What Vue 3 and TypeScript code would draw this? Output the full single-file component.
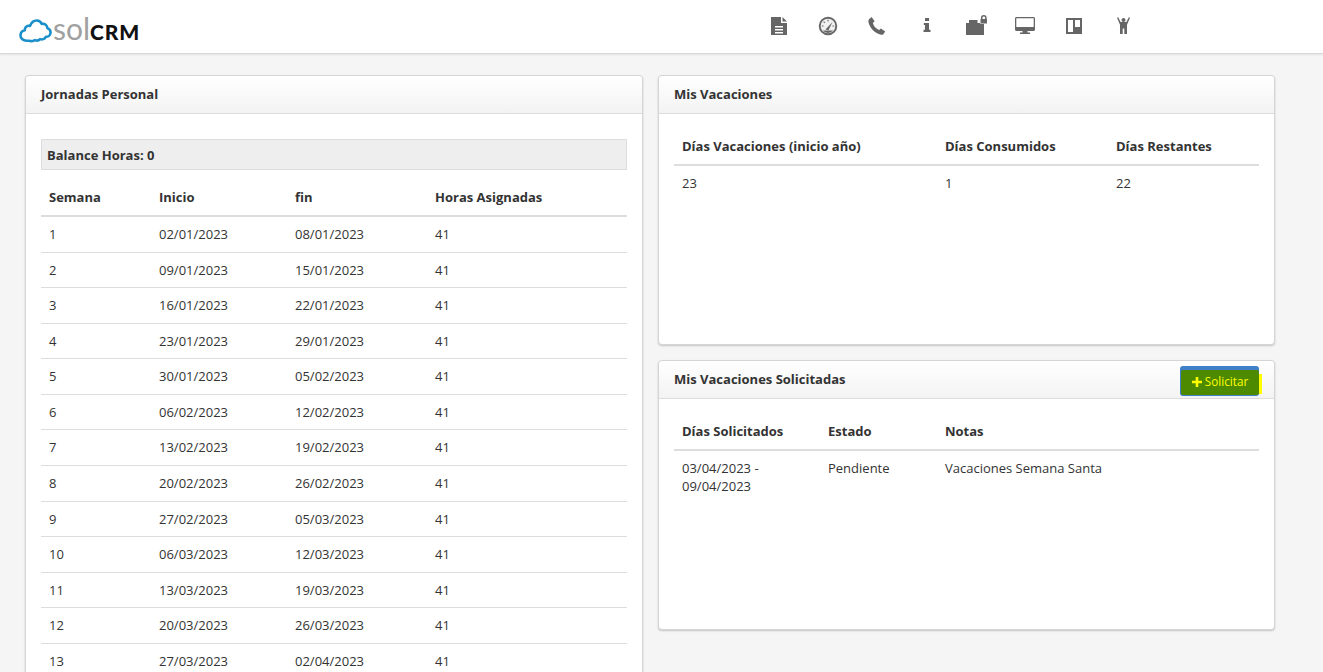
<script setup lang="ts">
const semanas = [
  ["02/01/2023", "08/01/2023"],
  ["09/01/2023", "15/01/2023"],
  ["16/01/2023", "22/01/2023"],
  ["23/01/2023", "29/01/2023"],
  ["30/01/2023", "05/02/2023"],
  ["06/02/2023", "12/02/2023"],
  ["13/02/2023", "19/02/2023"],
  ["20/02/2023", "26/02/2023"],
  ["27/02/2023", "05/03/2023"],
  ["06/03/2023", "12/03/2023"],
  ["13/03/2023", "19/03/2023"],
  ["20/03/2023", "26/03/2023"],
  ["27/03/2023", "02/04/2023"],
]
</script>

<template>
  <header class="topbar">
    <div class="logo">
      <svg class="cloud" width="33" height="25" viewBox="0 0 33 25" fill="none">
        <path
          d="M8 22.800c-3.800.2-6.500-2.300-6.500-5.400 0-2.600 1.700-4.700 4.300-5.200-.3-2.900 2.400-5 5.200-4.300C12.200 5 14.600 2.300 17.800 2.500c2.400.1 4.200 1.400 5 3.400 2.900-.6 5.500 1.400 5.600 4.200 2.100.8 3.300 2.700 3.100 4.700-.2 2.500-2.300 4.100-4.600 4-1.100 2.100-3.600 3.100-5.800 2.300-1.400 1.500-3.400 1.800-5.200 1-1.900 1-4.600 1.100-5.900.7z"
          stroke="#1b8fc9"
          stroke-width="2.600"
          stroke-linejoin="round"
        />
      </svg>
      <span class="sol">sol</span><span class="crm">CRM</span>
    </div>
    <nav class="iconos">
      <a>
        <svg width="18" height="20" viewBox="0 0 18 20">
          <path fill="#666" fill-rule="evenodd" d="M1 1h10v6h6v12H1zM12.500 1 17 5.500h-4.500zM5 10v1.500h8V10zm0 3v1.500h8V13zm0 3v1.500h8V16z" />
        </svg>
      </a>
      <a>
        <svg width="20" height="20" viewBox="0 0 20 20">
          <circle cx="10" cy="10" r="8.300" fill="#f0f0f0" stroke="#666" stroke-width="1.900" />
          <path d="M4.800 14.500h10.400A7 7 0 0 1 10 17a7 7 0 0 1-5.200-2.500z" fill="#666" />
          <path d="M7.500 13.500 14.500 6 10.500 14.200z" fill="#666" />
          <path d="M3.800 10h1.800M10 3.800v1.800M5.600 5.600l1.300 1.300M14.400 10h1.800" stroke="#777" stroke-width="1.200" />
        </svg>
      </a>
      <a>
        <svg width="20" height="20" viewBox="0 0 20 20">
          <path fill="#666" d="M2 3.200 4.600 1l3 4.300-1.700 1.700c.5 2.700 3.300 6 6.300 7l1.700-1.500 4.300 3-1.900 2.800c-.6.600-1.700.7-3 .3C7.500 16.800 3 12 1.500 6.500c-.3-1.300 0-2.500.5-3.300z" />
        </svg>
      </a>
      <a>
        <svg width="10" height="20" viewBox="0 0 10 20">
          <path fill="#666" d="M3 2h4v3H3zM1.800 7H7v6.800h1.500V16h-7v-2.200H3V9H1.800z" />
        </svg>
      </a>
      <a>
        <svg width="22" height="21" viewBox="0 0 22 21">
          <path fill="#666" d="M1 8h3V5h8.500v3H19v12H1z" />
          <path fill="#666" stroke="#fff" stroke-width="1" paint-order="stroke" d="M16 2.800a2.800 2.800 0 0 1 5.600 0V4h.4v4.500h-6.500V4h.5zm1.500 0V4h2.600V2.800a1.300 1.300 0 0 0-2.600 0z" />
        </svg>
      </a>
      <a>
        <svg width="20" height="18" viewBox="0 0 20 18">
          <path fill="#666" fill-rule="evenodd" d="M1.500 0h17c.800 0 1.500.700 1.500 1.500v11c0 .800-.700 1.500-1.500 1.500H12.500v1.500H15V17H5v-1.500h2.500V14h-6C.700 14 0 13.300 0 12.500v-11C0 .700.700 0 1.500 0zM1.300 1.300v8.700h17.400V1.300z" />
        </svg>
      </a>
      <a>
        <svg width="16" height="16" viewBox="0 0 16 16">
          <path fill="#666" fill-rule="evenodd" d="M0 0h16v16H0zM2 2v12h5V2zm7 0v7h5V2z" />
        </svg>
      </a>
      <a>
        <svg width="13" height="17" viewBox="0 0 13 17">
          <circle cx="6.500" cy="3" r="2" fill="#666" />
          <path fill="#666" d="M0 .8 1.200.2 3.600 5h5.800L11.800.2 13 .8l-3 7V17H7.300v-5.500H5.700V17H3V7.800z" />
        </svg>
      </a>
    </nav>
  </header>

  <main class="pagina">
    <section class="panel">
      <div class="panel-cab"><h3>Jornadas Personal</h3></div>
      <div class="panel-cuerpo">
        <div class="balance">Balance Horas: 0</div>
        <table class="tabla">
          <colgroup>
            <col style="width: 110px" />
            <col style="width: 136px" />
            <col style="width: 140px" />
            <col />
          </colgroup>
          <thead>
            <tr>
              <th>Semana</th>
              <th>Inicio</th>
              <th>fin</th>
              <th>Horas Asignadas</th>
            </tr>
          </thead>
          <tbody>
            <tr v-for="(s, i) in semanas" :key="i">
              <td>{{ i + 1 }}</td>
              <td>{{ s[0] }}</td>
              <td>{{ s[1] }}</td>
              <td>41</td>
            </tr>
          </tbody>
        </table>
      </div>
    </section>

    <div class="columna">
      <section class="panel panel-fijo">
        <div class="panel-cab"><h3>Mis Vacaciones</h3></div>
        <div class="panel-cuerpo">
          <table class="tabla">
            <colgroup>
              <col style="width: 263px" />
              <col style="width: 171px" />
              <col />
            </colgroup>
            <thead>
              <tr>
                <th>Días Vacaciones (inicio año)</th>
                <th>Días Consumidos</th>
                <th>Días Restantes</th>
              </tr>
            </thead>
            <tbody>
              <tr class="sin-linea">
                <td>23</td>
                <td>1</td>
                <td>22</td>
              </tr>
            </tbody>
          </table>
        </div>
      </section>

      <section class="panel panel-fijo">
        <div class="panel-cab cab-boton">
          <h3>Mis Vacaciones Solicitadas</h3>
          <button class="solicitar" type="button">
            <span class="marca-amarilla" />
            <span class="relleno-verde">
              <svg width="10" height="10" viewBox="0 0 10 10">
                <path fill="#ffff00" d="M3.700 0h2.600v3.700H10v2.600H6.300V10H3.700V6.300H0V3.700h3.700z" />
              </svg>
              Solicitar
            </span>
          </button>
        </div>
        <div class="panel-cuerpo">
          <table class="tabla tabla-justa">
            <colgroup>
              <col style="width: 146px" />
              <col style="width: 117px" />
              <col />
            </colgroup>
            <thead>
              <tr>
                <th>Días Solicitados</th>
                <th>Estado</th>
                <th>Notas</th>
              </tr>
            </thead>
            <tbody>
              <tr class="sin-linea">
                <td>03/04/2023 - 09/04/2023</td>
                <td>Pendiente</td>
                <td>Vacaciones Semana Santa</td>
              </tr>
            </tbody>
          </table>
        </div>
      </section>
    </div>
  </main>
</template>

<style>
html,
body {
  height: 100%;
  margin: 0;
  overflow: hidden;
  background: #f5f5f5;
}
</style>

<style scoped>
.topbar {
  box-sizing: border-box;
  display: flex;
  align-items: center;
  height: 54px;
  background: #fff;
  border-bottom: 1px solid #d8d8d8;
  box-shadow: 0 1px 2px rgba(0, 0, 0, 0.08);
}
.logo {
  display: flex;
  align-items: baseline;
  width: 754px;
  padding-left: 19px;
  box-sizing: border-box;
  font-family: "Lato", sans-serif;
  line-height: 1;
  margin-top: 2px;
}
.cloud {
  align-self: center;
  margin: 5px 1px 0 0;
}
.sol {
  color: #a0a0a0;
  font-size: 30px;
  font-weight: 400;
}
.crm {
  color: #111;
  font-size: 21px;
  font-weight: 900;
  letter-spacing: 0.8px;
}
.iconos {
  display: flex;
  margin-top: -2px;
}
.iconos a {
  display: flex;
  justify-content: center;
  align-items: center;
  width: 49.3px;
  height: 24px;
}
.pagina {
  display: grid;
  grid-template-columns: 618px 617px;
  column-gap: 15px;
  align-items: start;
  padding: 21px 0 0 25px;
  font-family: "Open Sans", sans-serif;
  font-size: 13px;
  line-height: 1.42857;
  color: #333;
}
.columna {
  display: flex;
  flex-direction: column;
  gap: 15px;
}
.panel {
  box-sizing: border-box;
  background: #fff;
  border: 1px solid #d5d5d5;
  border-radius: 4px;
  box-shadow: 0 1px 2px rgba(0, 0, 0, 0.2);
}
.panel-fijo {
  height: 270px;
}
.panel-cab {
  box-sizing: border-box;
  display: flex;
  align-items: center;
  justify-content: space-between;
  height: 37.5px;
  padding: 0 15px;
  background: linear-gradient(to bottom, #fff, #f3f3f3);
  border-bottom: 1px solid #ddd;
  border-radius: 4px 4px 0 0;
}
.panel-cab h3 {
  margin: 0;
  font-size: 13px;
  font-weight: 700;
  color: #333;
}
.cab-boton {
  height: 38px;
}
.panel-cuerpo {
  padding: 15px;
}
.balance {
  box-sizing: border-box;
  height: 31px;
  margin: 10px 0;
  padding: 2px 5px 0;
  display: flex;
  align-items: center;
  background: #eee;
  border: 1px solid #ddd;
  font-weight: 700;
}
.tabla {
  width: 100%;
  border-collapse: collapse;
  table-layout: fixed;
}
.tabla th {
  padding: 8px 8px 9px;
  text-align: left;
  font-weight: 700;
  border-bottom: 2px solid #ddd;
}
.tabla-justa th {
  padding-bottom: 8px;
}
.tabla td {
  padding: 8px;
  vertical-align: top;
  border-bottom: 1px solid #ddd;
}
.sin-linea td {
  border-bottom: 0;
}
.solicitar {
  position: relative;
  width: 79px;
  height: 30px;
  padding: 0;
  margin-top: 2px;
  border: 0;
  border-radius: 3px;
  background: #3f80c8;
  font-family: inherit;
}
.relleno-verde {
  position: absolute;
  left: 1px;
  top: 4px;
  right: 0;
  bottom: 1px;
  display: flex;
  align-items: center;
  justify-content: center;
  gap: 3px;
  background: #4d8a00;
  border-radius: 2px;
  color: #ffff00;
  font-size: 11.7px;
  line-height: 1;
}
.marca-amarilla {
  position: absolute;
  left: 79px;
  top: 8px;
  width: 3px;
  height: 20px;
  background: #ffff00;
}
</style>
